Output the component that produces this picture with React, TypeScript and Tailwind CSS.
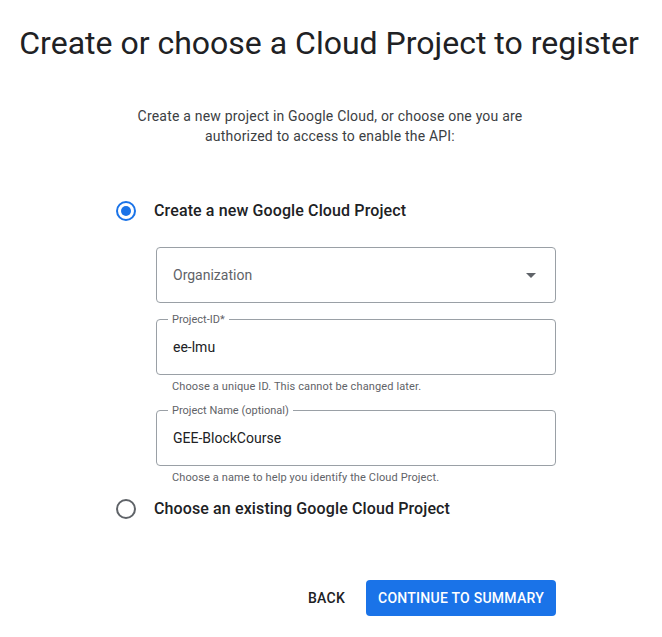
import React from "react";

function Radio({ checked }: { checked: boolean }) {
  return (
    <span
      className={
        "flex h-5 w-5 shrink-0 items-center justify-center rounded-full border-2 " +
        (checked ? "border-[#1a73e8]" : "border-[#5f6368]")
      }
    >
      {checked && <span className="h-2.5 w-2.5 rounded-full bg-[#1a73e8]" />}
    </span>
  );
}

function OutlinedField({ label, value }: { label: string; value: string }) {
  return (
    <div className="relative flex h-14 items-center rounded border border-[#9aa0a6] pl-4">
      <span className="absolute -top-[8px] left-[11px] bg-white px-1 text-[11px] leading-4 text-[#5f6368]">
        {label}
      </span>
      <span className="text-sm text-[#202124]">{value}</span>
    </div>
  );
}

function App() {
  return (
    <div className="min-h-screen bg-white font-['Roboto',sans-serif] text-[#202124]">
      <h1 className="pt-[23px] pr-1 text-center text-[32px] leading-10 font-normal">
        Create or choose a Cloud Project to register
      </h1>

      <p className="mx-auto mt-[43px] w-[410px] pr-[2px] text-center text-sm leading-5 tracking-[0.2px] text-[#3c4043]">
        Create a new project in Google Cloud, or choose one you are authorized to access to enable the API:
      </p>

      <div className="ml-[116px] mt-[53px] w-[440px]">
        <label className="flex h-6 items-center gap-[18px]">
          <Radio checked />
          <span className="text-base font-medium tracking-[0.12px]">Create a new Google Cloud Project</span>
        </label>

        <div className="ml-10 mt-6 flex flex-col">
          <div className="flex h-14 items-center justify-between rounded border border-[#9aa0a6] pl-4 pr-[19px]">
            <span className="text-sm text-[#5f6368]">Organization</span>
            <svg width="10" height="5" viewBox="0 0 10 5">
              <path d="M0 0 L5 5 L10 0 Z" fill="#5f6368" />
            </svg>
          </div>

          <div className="mt-4">
            <OutlinedField label="Project-ID*" value="ee-lmu" />
          </div>
          <p className="mt-[4px] pl-4 text-[11px] leading-4 tracking-[0.12px] text-[#5f6368]">
            Choose a unique ID. This cannot be changed later.
          </p>

          <div className="mt-[15px]">
            <OutlinedField label="Project Name (optional)" value="GEE-BlockCourse" />
          </div>
          <p className="mt-[4px] pl-4 text-[11px] leading-4 tracking-[0.12px] text-[#5f6368]">
            Choose a name to help you identify the Cloud Project.
          </p>
        </div>

        <label className="mt-[11px] flex h-6 items-center gap-[18px]">
          <Radio checked={false} />
          <span className="text-base font-medium tracking-[0.12px]">Choose an existing Google Cloud Project</span>
        </label>

        <div className="mt-[59px] flex items-center justify-end gap-[5px]">
          <button className="h-9 rounded px-4 text-sm font-medium tracking-[0.25px] text-[#202124]">
            BACK
          </button>
          <button className="h-9 rounded bg-[#1a73e8] px-3 text-sm font-medium tracking-[0.25px] text-white">
            CONTINUE TO SUMMARY
          </button>
        </div>
      </div>
    </div>
  );
}

export default App;
